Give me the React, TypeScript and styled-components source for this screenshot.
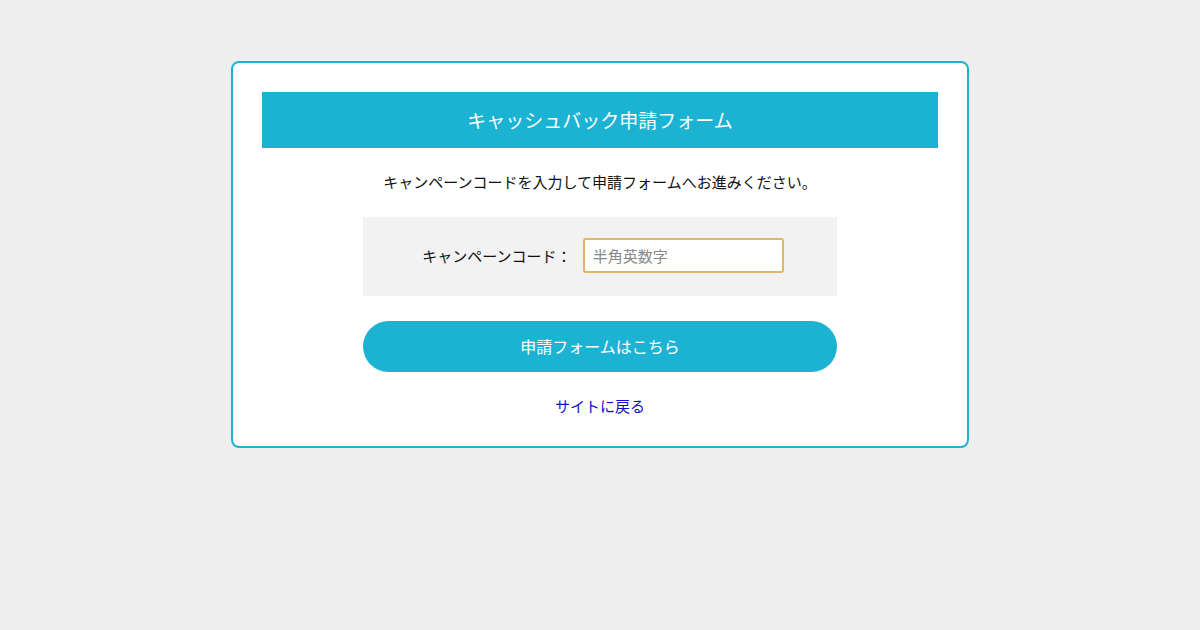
import styled, { createGlobalStyle } from "styled-components";

const GlobalStyle = createGlobalStyle`
  html, body {
    margin: 0;
    padding: 0;
    background: #eeeeee;
    font-family: "Noto Sans CJK JP", "Noto Sans", sans-serif;
    color: #111;
  }
`;

const Page = styled.div`
  display: flex;
  justify-content: center;
  align-items: flex-start;
  padding-top: 61px;
  min-height: 630px;
  box-sizing: border-box;
`;

const Card = styled.div`
  width: 738px;
  box-sizing: border-box;
  background: #fff;
  border: 2px solid #1cb3d2;
  border-radius: 8px;
  padding: 29px;
  display: flex;
  flex-direction: column;
  align-items: center;
`;

const Title = styled.h1`
  margin: 0;
  width: 100%;
  height: 56px;
  background: #1cb3d2;
  color: #fff;
  font-size: 19px;
  font-weight: 400;
  display: flex;
  align-items: center;
  justify-content: center;
  padding-bottom: 2px;
  box-sizing: border-box;
`;

const Lead = styled.p`
  margin: 23px 0 24px;
  font-size: 15px;
  line-height: 22px;
`;

const CodeBox = styled.div`
  width: 474px;
  height: 79px;
  background: #f2f2f2;
  display: flex;
  align-items: center;
  justify-content: center;
  gap: 11px;
  padding-left: 6px;
  padding-bottom: 2px;
  box-sizing: border-box;
`;

const Label = styled.label`
  font-size: 15px;
  line-height: 22px;
`;

const CodeInput = styled.input`
  width: 201px;
  height: 35px;
  box-sizing: border-box;
  border: 2px solid #e3b566;
  border-radius: 3px;
  padding: 0 8px;
  font-family: inherit;
  font-size: 15px;
  outline: none;
  &::placeholder {
    color: #888;
  }
`;

const SubmitButton = styled.button`
  margin-top: 25px;
  width: 474px;
  height: 51px;
  border: none;
  border-radius: 26px;
  background: #1cb3d2;
  color: #fff;
  font-family: inherit;
  font-size: 16px;
  padding-bottom: 3px;
  cursor: pointer;
`;

const BackLink = styled.a`
  margin-top: 23px;
  font-size: 15px;
  line-height: 22px;
  color: #1010cc;
  text-decoration: none;
`;

export default function App() {
  return (
    <>
      <GlobalStyle />
      <Page>
        <Card>
          <Title>キャッシュバック申請フォーム</Title>
          <Lead>キャンペーンコードを入力して申請フォームへお進みください。</Lead>
          <CodeBox>
            <Label htmlFor="code">キャンペーンコード：</Label>
            <CodeInput id="code" type="text" placeholder="半角英数字" autoFocus />
          </CodeBox>
          <SubmitButton type="button">申請フォームはこちら</SubmitButton>
          <BackLink href="#">サイトに戻る</BackLink>
        </Card>
      </Page>
    </>
  );
}
